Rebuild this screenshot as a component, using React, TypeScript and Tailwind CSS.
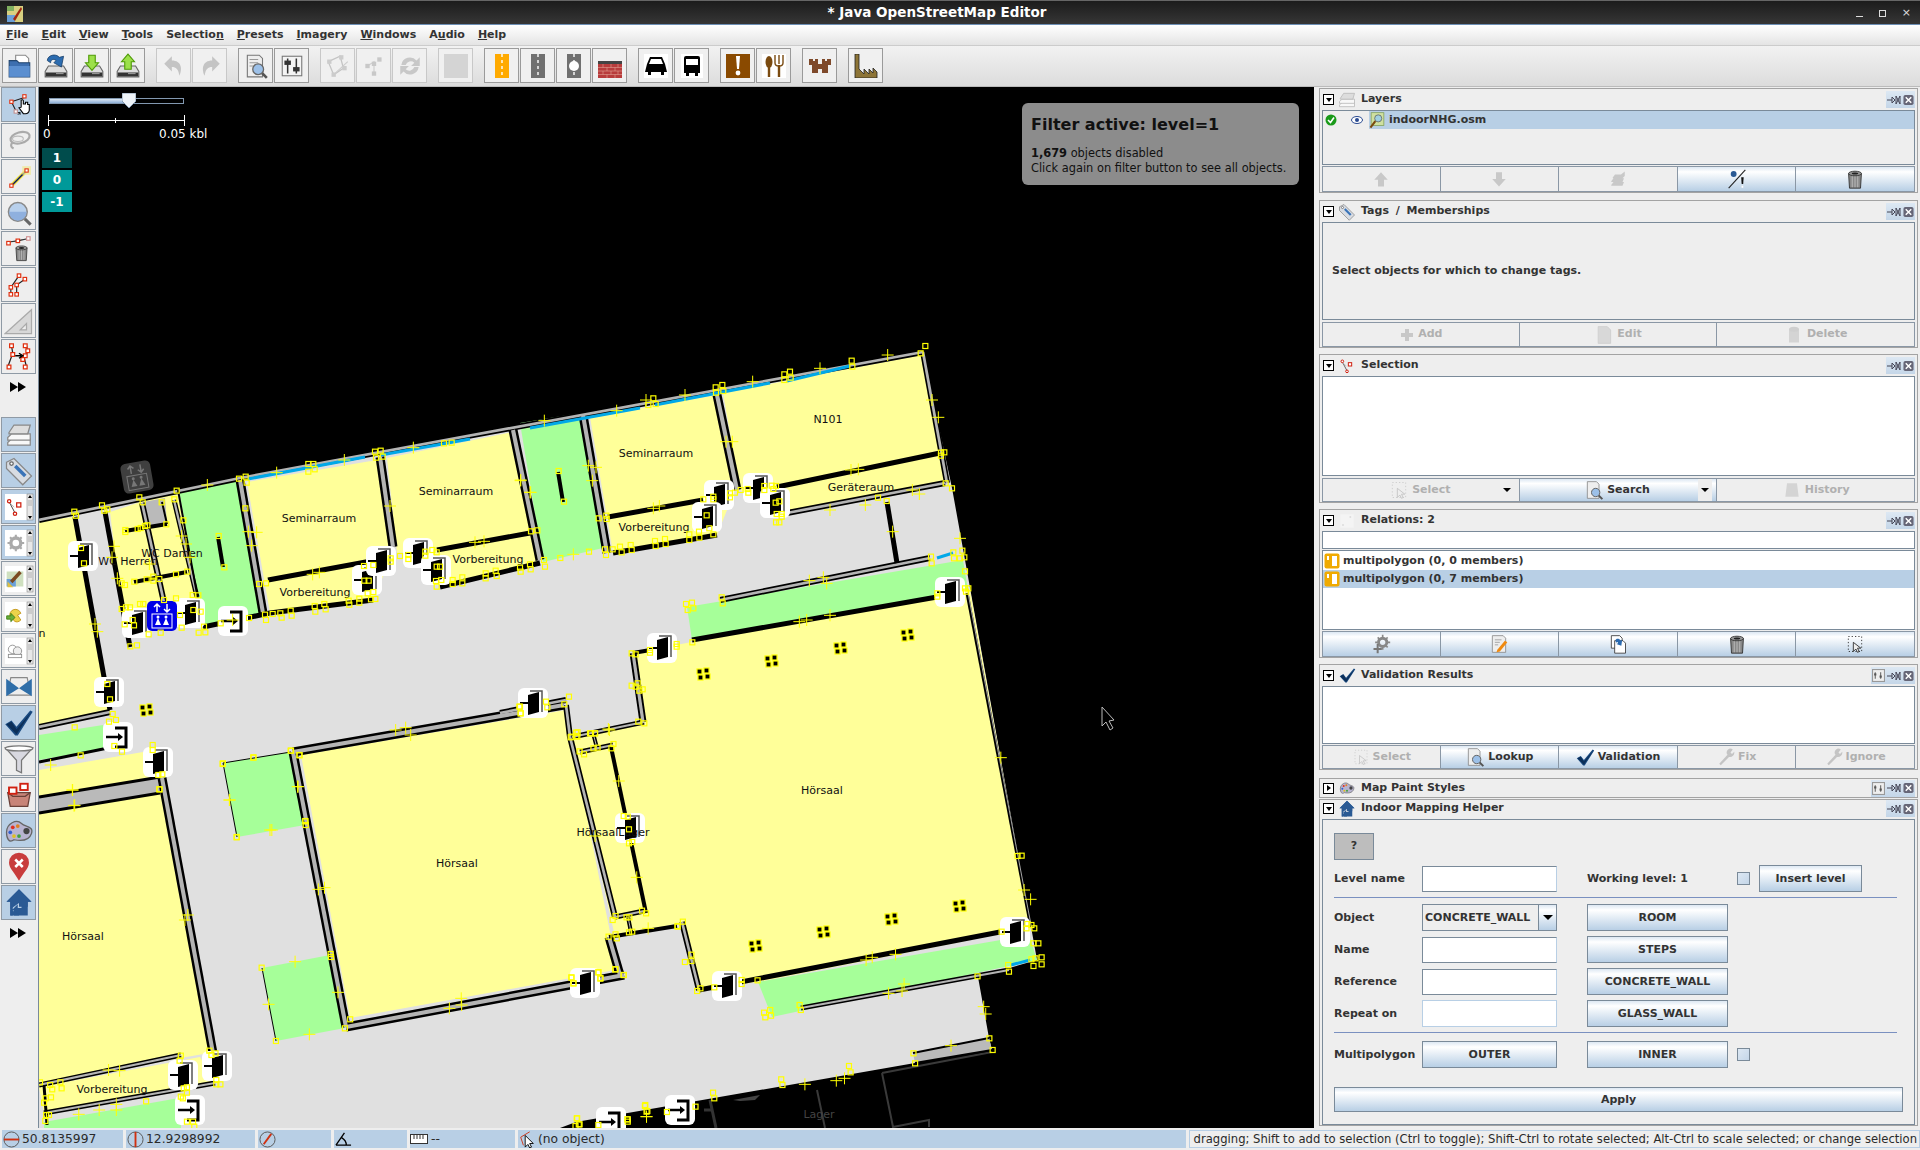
import type { ReactNode } from "react";

// ---------- map data (zoom crops converted to page pixels) ----------
type P = [number, number];
const z9 = (a: P[]) => a.map(([x, y]): P => [40 + x / 3, 440 + y / 3]);
const z10 = (a: P[]) => a.map(([x, y]): P => [500 + x / 3, 340 + y / 3]);
const z11 = (a: P[]) => a.map(([x, y]): P => [40 + x / 2.45, 700 + y / 3]);
const z12 = (a: P[]) => a.map(([x, y]): P => [560 + x / 2.45, 620 + y / 3]);

const squares: P[] = [
  ...z9([[103,215],[108,227],[186,196],[202,208],[193,212],[298,172],[308,187],[365,187],[403,178],[410,152],[430,241],[379,253],[293,267],[302,264],[315,258],[322,256],[256,270],[256,276],[597,116],[617,110],[620,128],[616,205],[805,72],[820,72],[824,88],[805,95],[1005,35],[1022,32],[1028,50],[1008,53],[1212,10],[1235,8],[536,288],[553,382],[320,418],[340,410],[340,422],[358,417],[408,403],[283,425],[442,395],[245,430],[255,435],[300,492],[310,492],[372,480],[408,475],[458,465],[475,466],[245,507],[258,502],[270,502],[254,553],[278,540],[282,556],[326,583],[362,578],[271,619],[291,616],[420,525],[425,563],[460,510],[482,515],[492,560],[476,578],[496,577],[542,550],[627,534],[657,432],[678,430],[675,524],[678,540],[698,522],[721,520],[725,533],[752,512],[755,527],[824,498],[826,515],[853,492],[857,508],[926,482],[928,494],[958,476],[958,488],[993,478],[1006,477],[983,460],[1000,456],[972,378],[973,422],[986,422],[1000,375],[1052,355],[1052,365],[1080,348],[1105,345],[1105,357],[1156,335],[1156,347],[1177,330],[1190,337],[1190,380],[1200,380],[1188,423],[1204,420],[1190,440],[1238,420],[1238,432],[1267,412],[1267,430],[1337,400],[1337,415],[1367,392],[1370,408],[1440,383],[1442,395],[1470,373],[1472,388],[1473,274],[1492,271],[123,324],[132,370],[202,732],[210,778],[218,822],[228,840],[207,845],[223,918],[246,935],[338,915],[338,930],[355,1005],[367,1003],[104,862],[122,946],[358,1048],[548,972],[640,953],[752,932],[778,945],[796,1144],[590,1192],[1440,800],[1442,820]]),
  ...z10([[445,195],[460,175],[467,192],[647,142],[667,135],[670,153],[648,158],[853,103],[870,95],[872,113],[853,120],[1055,62],[1057,80],[1262,40],[1276,18],[1323,338],[1333,337],[1323,347],[1337,430],[1356,445],[1160,483],[1134,473],[319,527],[320,537],[296,535],[315,628],[318,645],[338,628],[360,620],[365,637],[392,615],[395,630],[465,603],[467,618],[495,597],[497,612],[568,583],[568,600],[597,575],[598,593],[640,583],[628,565],[610,478],[640,470],[640,478],[690,460],[690,472],[705,458],[722,450],[743,447],[745,458],[793,438],[793,450],[815,437],[828,438],[820,447],[827,488],[838,484],[830,522],[845,522],[845,530],[828,547],[838,547],[620,526],[176,393],[192,485],[132,660],[135,680],[181,654],[267,635],[558,792],[576,788],[563,810],[580,805],[665,772],[668,790],[577,907],[395,940],[407,943],[530,912],[530,920],[450,930],[450,938],[395,1037],[413,1030],[407,1040],[428,1048],[418,1052],[415,1145],[433,1150],[193,1093],[207,1070],[138,1085],[142,1102],[58,1100],[62,1120],[228,1178],[232,1190],[212,1192],[270,1180],[285,1180],[1293,650],[1295,670],[1360,637],[1362,655],[1380,655],[1393,652],[1387,632],[1395,694],[1312,760],[1312,770],[1395,745],[1405,745],[1398,755]]),
  ...z11([[1302,110],[1314,108],[1317,97],[1350,100],[1360,100],[1405,132],[1400,145],[1322,154],[1333,163],[1356,145],[1366,143],[1430,348],[1440,350],[1443,388],[1443,430],[1451,426],[1403,660],[1410,648],[1437,652],[1444,652],[1475,632],[1485,640],[1443,697],[1451,695],[1393,710],[1410,703],[1413,715],[1410,808],[1430,825],[1562,680],[1302,832],[1307,850],[1368,817],[1373,834],[448,190],[523,172],[615,152],[636,166],[650,363],[651,375],[482,411],[543,803],[712,762],[713,771],[760,958],[747,985],[578,1023],[293,268],[415,1052],[420,1065],[430,1060],[345,1067],[342,1082],[432,1140],[432,1153],[442,1153],[352,1165],[360,1162],[360,1178],[345,1190],[350,1195],[0,1147],[25,1155],[50,1147],[53,1165],[30,1168],[14,1195],[27,1192],[10,1208],[15,1245],[22,1245],[13,1263],[260,1204],[375,1265],[360,1265],[378,1280],[1315,1255],[1320,1273],[1312,1278],[1368,1275],[1440,1258],[1440,1265],[1483,1215],[1488,1233],[1536,1236]]),
  ...z12([[1121,708],[1131,707],[1145,912],[1155,915],[1162,925],[1143,925],[1160,970],[1172,970],[1165,1015],[1180,1012],[1155,1018],[1160,1038],[1180,1033],[1098,1035],[1100,1055],[1023,1069],[1082,935],[1052,1255],[1060,1290],[866,1300],[870,1330],[587,1155],[590,1170],[500,1178],[503,1192],[515,1170],[517,1187],[484,1081],[336,1113],[344,1105],[378,1102],[306,1026],[322,1023],[322,1004],[301,905],[288,918],[156,1065],[135,1048],[94,1057],[99,1076],[28,1073],[33,1090],[445,1080],[445,1092],[375,1418],[378,1435],[542,1378],[545,1395],[708,1338],[712,1357],[208,1458],[212,1475],[42,1495],[48,1513],[332,1460],[165,1498]]),
];

const crosses: P[] = [
  ...z9([[502,135],[710,98],[913,60],[1120,23],[1442,120],[1470,157],[1050,198],[625,275],[650,277],[635,317],[425,288],[438,312],[450,352],[328,372],[222,319],[216,352],[232,415],[818,403],[838,397],[1305,307],[1332,304],[578,540],[165,552],[172,575],[32,975],[97,1050],[102,1097],[1067,870],[1097,863],[1112,885],[773,1040],[568,1080],[690,1170]]),
  ...z10([[133,242],[350,212],[438,180],[555,165],[758,125],[960,85],[1163,45],[1296,180],[1315,232],[1237,450],[1258,462],[1096,495],[990,510],[1053,390],[1075,388],[678,305],[697,305],[460,505],[478,498],[265,377],[288,382],[277,422],[1178,575],[1380,595],[928,722],[970,712],[980,730],[898,845],[920,840],[990,826],[325,1167],[220,643],[62,422],[92,457]]),
  ...z11([[1395,90],[1418,243],[1360,408],[1462,532],[1490,685],[362,645],[355,660],[625,785],[730,877],[560,913],[660,1003],[1003,925],[1032,895],[1033,915],[168,1110],[195,1112],[187,1213],[187,1230],[95,1243],[145,1230],[1486,1250],[80,270],[85,316],[632,260],[465,300],[568,390],[682,568],[697,563]]),
  ...z12([[1080,413],[1137,810],[1153,838],[750,1020],[765,1012],[822,1003],[805,1120],[838,1113],[843,1092],[1038,1160],[1043,1182],[958,1277],[600,1393],[677,1382],[697,1375],[212,1490]]),
];

// 4-node furniture clusters in the big hall
const clusters: P[] = [[703,674],[771,661],[840,648],[907,635],[755,946],[823,932],[891,919],[959,906],[146,710]];

const doors: P[] = [[83,556],[109,692],[158,762],[137,623],[190,613],[367,580],[381,561],[418,553],[436,570],[533,703],[719,495],[707,517],[758,488],[775,503],[662,648],[950,592],[630,828],[585,983],[183,1075],[217,1066],[727,986],[1015,932]];
const entrances: P[] = [[233,621],[118,737],[190,1110],[611,1122],[680,1110]];

const yellow = [
  "723,393 921,355 945,483 787,513 740,490",
  "590,417 717,395 735,490 717,535 613,553",
  "387,458 513,432 537,563 440,587 425,550 397,553",
  "247,482 377,460 393,553 373,600 270,613",
  "110,512 177,490 197,597 122,612",
  "39,521 73,517 110,710 39,727",
  "39,770 143,752 160,777 39,797",
  "39,813 160,790 209,1053 39,1083",
  "39,1087 200,1057 215,1083 44,1113",
  "301,755 566,710 571,737 611,937 615,970 350,1018",
  "633,653 692,642 970,590 1031,928 758,982 699,990 682,922 650,930 615,937 571,737 643,722",
];
const green = [
  "179,490 240,480 263,613 203,627",
  "520,423 580,413 603,548 543,562",
  "39,735 103,725 108,748 39,760",
  "44,1122 179,1098 181,1128 44,1128",
  "223,763 291,752 305,825 237,837",
  "262,968 330,955 345,1028 276,1041",
  "687,607 963,560 968,590 692,640",
  "758,982 1029,935 1037,960 772,1017",
];
const grayFill = [
  "143,502 165,498 167,523 147,528",
  "39,797 160,777 160,793 39,813",
  "913,1053 989,1038 992,1050 915,1063",
];

// black line with gray core
const doubleWalls: [string, number][] = [
  ["39,520 240,478 923,352", 6],
  ["240,480 263,613", 9],
  ["513,430 540,560", 9],
  ["583,415 607,553", 9],
  ["380,457 393,547", 9],
  ["717,395 737,490", 9],
  ["923,352 947,483", 6],
  ["787,513 945,483", 6],
  ["720,600 930,558", 6],
  ["633,653 643,722", 7],
  ["572,737 644,722", 5],
  ["580,752 613,745", 5],
  ["39,727 110,712", 6],
  ["162,778 213,1053", 9],
  ["39,1085 181,1055", 5],
  ["44,1113 215,1083", 5],
  ["500,713 566,700", 6],
  ["293,752 564,705", 9],
  ["293,752 346,1027", 9],
  ["346,1027 624,975", 9],
  ["566,705 570,737 615,917", 6],
  ["609,937 620,975", 9],
  ["615,917 644,911", 5],
  ["593,733 597,748", 4],
  ["628,917 631,932", 4],
  ["682,922 699,990", 6],
  ["801,1008 1009,970", 5],
  ["142,503 165,607", 6],
  ["174,500 197,597", 5],
];
const blackWalls: [string, number][] = [
  ["178,490 203,627", 2],
  ["218,537 223,567", 4],
  ["558,472 563,502", 4],
  ["268,580 393,557", 5],
  ["437,550 530,533", 5],
  ["608,517 703,500", 5],
  ["777,487 940,453", 5],
  ["203,627 270,613 373,600", 5],
  ["440,587 540,563", 5],
  ["613,553 717,535", 5],
  ["887,502 897,563", 5],
  ["692,640 937,597", 5],
  ["633,653 662,648", 4],
  ["75,517 110,710", 5],
  ["105,512 130,647", 5],
  ["162,502 167,524", 2],
  ["125,531 167,524", 4],
  ["134,582 187,572", 4],
  ["39,762 108,748", 3],
  ["39,797 160,777", 3],
  ["39,813 160,793", 3],
  ["611,747 646,913", 4],
  ["609,937 677,926", 4],
  ["699,990 1000,932", 5],
  ["913,1053 989,1038", 2],
  ["915,1063 992,1050", 2],
  ["223,763 291,752", 1],
  ["223,763 237,837", 1],
  ["262,968 276,1041", 1],
  ["44,1085 47,1125", 3],
];
const blueSegs = ["248,479 365,457", "381,455 470,439", "530,428 640,408", "655,405 770,383", "787,381 850,366", "1011,965 1030,960", "937,558 953,553"];
const labels: [string, number, number][] = [
  ["Seminarraum", 319, 518],
  ["Seminarraum", 456, 491],
  ["Seminarraum", 656, 453],
  ["N101", 828, 419],
  ["Geräteraum", 861, 487],
  ["Vorbereitung", 315, 592],
  ["Vorbereitung", 488, 559],
  ["Vorbereitung", 654, 527],
  ["Vorbereitung", 112, 1089],
  ["WC Herren", 128, 561],
  ["WC Damen", 172, 553],
  ["Hörsaal", 457, 863],
  ["Hörsaal", 83, 936],
  ["Hörsaal", 822, 790],
  ["HörsaalLager", 613, 832],
  ["n", 42, 633],
];

function Door({ x, y }: { x: number; y: number }) {
  return (
    <g transform={`translate(${x} ${y})`}>
      <rect x="-15" y="-15" width="30" height="30" rx="6" fill="#fff" />
      <path d="M-3 -12H9V9" stroke="#555" strokeWidth="1.5" fill="none" />
      <polygon points="-5,-8 6,-11 6,9 -5,12" fill="#000" />
      <path d="M-13 0H-4" stroke="#000" strokeWidth="2" />
    </g>
  );
}

function Entrance({ x, y }: { x: number; y: number }) {
  return (
    <g transform={`translate(${x} ${y})`}>
      <rect x="-15" y="-15" width="30" height="30" rx="6" fill="#fff" />
      <path d="M-3 -9H8V10H-3" stroke="#000" strokeWidth="3" fill="none" />
      <path d="M-12 0H2" stroke="#000" strokeWidth="2.5" />
      <path d="M0 -4L5 0L0 4Z" fill="#000" />
    </g>
  );
}

function Elevator({ x, y, bg, fg, rot = 0 }: { x: number; y: number; bg: string; fg: string; rot?: number }) {
  return (
    <g transform={`translate(${x} ${y}) rotate(${rot})`}>
      <rect x="-15" y="-15" width="30" height="30" rx="5" fill={bg} />
      <path d="M-5 -4V-12M-8 -9L-5 -12L-2 -9M5 -12V-4M2 -7L5 -4L8 -7" stroke={fg} strokeWidth="1.5" fill="none" />
      <rect x="-10" y="-2" width="20" height="14" fill="none" stroke={fg} />
      <circle cx="-4" cy="1" r="1.5" fill={fg} />
      <circle cx="4" cy="1" r="1.5" fill={fg} />
      <path d="M-4 2L-7 9H-1ZM4 2L1 9H7Z" fill={fg} />
    </g>
  );
}

function MapCanvas() {
  return (
    <svg viewBox="39 87 1275 1041" className="block w-full h-full bg-black">
      {/* ghost layers */}
      <Elevator x={137} y={477} bg="#3f3f3f" fg="#777" rot={-10} />
      <polygon points="39,520 240,478 923,352 952,488 965,560 1037,960 978,977 989,1038 992,1050 915,1063 576,1122 560,1128 39,1128" fill="#e0e0e0" />
      <path d="M817 1090L825 1128M882 1073L893 1127L929 1120V1127M882 1073L992 1052" stroke="#3a3a3a" strokeWidth="2" fill="none" />
      <path d="M710 1100L716 1128M704 1110H712" stroke="#333" strokeWidth="3" fill="none" />
      <polygon points="733,1100 760,1095 755,1100 740,1101" fill="#444" />
      <text x={819} y={1118} textAnchor="middle" fontSize={11} fill="#444">Lager</text>

      {yellow.map((p) => <polygon key={p} points={p} fill="#ffff99" />)}
      {green.map((p) => <polygon key={p} points={p} fill="#a6ff99" />)}
      {grayFill.map((p) => <polygon key={p} points={p} fill="#bababa" />)}

      {doubleWalls.map(([p, w]) => (
        <polyline key={p} points={p} fill="none" stroke="#000" strokeWidth={w} />
      ))}
      {doubleWalls.map(([p, w]) => (
        <polyline key={p + "c"} points={p} fill="none" stroke="#b4b4b4" strokeWidth={w > 4 ? w / 2.2 : 1} />
      ))}
      {blackWalls.map(([p, w]) => (
        <polyline key={p} points={p} fill="none" stroke="#000" strokeWidth={w} />
      ))}
      {blueSegs.map((p) => <polyline key={p} points={p} fill="none" stroke="#00a8e8" strokeWidth={3} />)}
      <polyline points="967,593 1031,928" stroke="#000" strokeWidth={3} />
      <polyline points="968,593 1032,930" stroke="#d0d0d0" strokeWidth={0.8} />

      {doors.map(([x, y]) => <Door key={`${x}-${y}`} x={x} y={y} />)}
      {entrances.map(([x, y]) => <Entrance key={`${x}-${y}`} x={x} y={y} />)}
      <Elevator x={162} y={616} bg="#0000e6" fg="#fff" />

      {labels.map(([t, x, y]) => (
        <text key={t + x} x={x} y={y + 4} textAnchor="middle" fontSize={11} fill="#111">{t}</text>
      ))}

      {crosses.map(([x, y], i) => (
        <path key={i} d={`M${x - 6} ${y}H${x + 6}M${x} ${y - 6}V${y + 6}`} stroke="#ffff00" strokeWidth={1} />
      ))}
      {squares.map(([x, y], i) => (
        <rect key={i} x={x - 2.5} y={y - 2.5} width={5} height={5} fill="none" stroke="#ffff00" strokeWidth={1.2} />
      ))}
      {clusters.map(([x, y], i) => (
        <g key={i} fill="#000" stroke="#ffff00" strokeWidth={1.2}>
          <rect x={x - 6} y={y - 5} width={5} height={5} />
          <rect x={x + 1} y={y - 6} width={5} height={5} />
          <rect x={x - 5} y={y + 1} width={5} height={5} />
          <rect x={x + 2} y={y} width={5} height={5} />
        </g>
      ))}

      {/* mouse pointer */}
      <path d="M1102 707V726L1106 722L1110 730L1113 728L1109 721L1114 720Z" fill="#000" stroke="#bbb" strokeWidth={1} />
    </svg>
  );
}

// ---------- icons ----------
function Ico({ s = 26, children, className = "" }: { s?: number; children: ReactNode; className?: string }) {
  return (
    <svg viewBox="0 0 24 24" width={s} height={s} className={className}>
      {children}
    </svg>
  );
}

const N = ({ x, y, c = "#e03010" }: { x: number; y: number; c?: string }) => (
  <rect x={x - 1.5} y={y - 1.5} width="3" height="3" fill="#fff" stroke={c} strokeWidth="1" />
);

const Drive = () => (
  <g>
    <path d="M5 12H19L22 17V22H2V17Z" fill="#ddd" stroke="#666" />
    <rect x="2.5" y="18" width="19" height="3.5" fill="#333" />
    <path d="M12 19H19" stroke="#999" />
  </g>
);
const GreenArrow = ({ up = false }: { up?: boolean }) => (
  <path d={up ? "M12 1L18 8H15V15H9V8H6Z" : "M12 16L18 9H15V2H9V9H6Z"} fill="#9ce04a" stroke="#4e9a06" />
);
const IconFolder = () => (
  <Ico><path d="M8 2H17L20 5V14H8Z" fill="#fff" stroke="#888" /><path d="M2 7H9L11 9H21V22H2Z" fill="#3d6fb0" stroke="#23466f" /><path d="M2 12H21V22H2Z" fill="#5b8fd0" /></Ico>
);
const IconOpenLoc = () => (
  <Ico><Drive /><path d="M4 7C4 2 12 0 15 4L19 3L17 13L10 9L12 7C10 5 7 6 7 9Z" fill="#2c6cb0" stroke="#173c64" strokeWidth=".7" /></Ico>
);
const IconDown = () => <Ico><Drive /><GreenArrow /></Ico>;
const IconUp = () => <Ico><Drive /><GreenArrow up /></Ico>;
const IconUndo = () => <Ico><path d="M10 3L3 10L10 17V13C14 13 16 15 17 21C20 15 19 7 10 7Z" fill="#c4c4c4" /></Ico>;
const IconRedo = () => <Ico><path d="M14 3L21 10L14 17V13C10 13 8 15 7 21C4 15 5 7 14 7Z" fill="#c4c4c4" /></Ico>;
const Lens = ({ x = 15, y = 15, r = 5 }: { x?: number; y?: number; r?: number }) => (
  <g>
    <path d={`M${x + r * 0.7} ${y + r * 0.7}L${x + r + 3} ${y + r + 3}`} stroke="#555" strokeWidth="2.4" />
    <circle cx={x} cy={y} r={r} fill="#9cc0e8" stroke="#666" strokeWidth="1.2" />
  </g>
);
const IconPageSearch = () => (
  <Ico><path d="M4 2H15L18 5V22H4Z" fill="#eee" stroke="#777" /><path d="M6 6H14M6 9H14M6 12H10" stroke="#999" /><Lens x={14} y={15} r={5} /></Ico>
);
const IconPrefs = () => (
  <Ico><rect x="3" y="3" width="18" height="18" fill="#f4f4f4" stroke="#777" /><path d="M8 5V19M16 5V19" stroke="#333" strokeWidth="1.4" /><rect x="5" y="7" width="6" height="4" fill="#333" /><rect x="13" y="13" width="6" height="4" fill="#333" /></Ico>
);
const IconDisA = () => (
  <Ico><path d="M3 8L14 3L17 14L8 20Z" fill="none" stroke="#c4c4c4" strokeWidth="1.2" /><path d="M8 20L21 8" stroke="#ccc" /><rect x="2" y="6" width="4" height="4" fill="#ccc" /><rect x="13" y="2" width="4" height="4" fill="#ccc" /><rect x="6" y="18" width="4" height="4" fill="#ccc" /><rect x="16" y="12" width="4" height="4" fill="#ccc" /></Ico>
);
const IconDisB = () => (
  <Ico><path d="M6 12L12 8V18" stroke="#ccc" fill="none" /><rect x="4" y="10" width="4" height="4" fill="#c8c8c8" /><rect x="15" y="4" width="4" height="4" fill="#c8c8c8" /><rect x="10" y="8" width="4" height="4" fill="#c8c8c8" /><rect x="10" y="17" width="4" height="4" fill="#c8c8c8" /></Ico>
);
const IconDisC = () => (
  <Ico><path d="M4 11A8 8 0 0 1 18 7L21 4V12H13L16 9A5 5 0 0 0 8 11Z" fill="#c8c8c8" /><path d="M20 13A8 8 0 0 1 6 17L3 20V12H11L8 15A5 5 0 0 0 16 13Z" fill="#c8c8c8" /></Ico>
);
const IconRoad = ({ bg, dash = "#fff", circle = false }: { bg: string; dash?: string; circle?: boolean }) => (
  <Ico s={24}><rect x="5" y="0" width="14" height="24" fill={bg} /><path d="M12 0V24" stroke={dash} strokeWidth="1.4" strokeDasharray="3 3" />{circle && <circle cx="12" cy="12" r="5" fill="#fff" />}</Ico>
);
const IconWall = () => (
  <Ico s={24}>
    <rect x="0" y="10" width="24" height="14" fill="#b83c3c" />
    <rect x="0" y="7" width="24" height="3" fill="#444" />
    <path d="M0 13.5H24M0 17H24M0 20.5H24M5 10V13.5M13 10V13.5M20 10V13.5M9 13.5V17M17 13.5V17M5 17V20.5M13 17V20.5M20 17V20.5M9 20.5V24M17 20.5V24" stroke="#e8b0a0" strokeWidth=".5" />
  </Ico>
);
const IconCar = () => (
  <Ico s={24}><rect x="0" y="0" width="24" height="24" fill="#fff" /><path d="M6 3H18L21 10L23 18H20V21H17V18H7V21H4V18H1L3 10ZM7 5L5 10H19L17 5Z" fill="#000" fillRule="evenodd" /></Ico>
);
const IconBus = () => (
  <Ico s={24}><rect x="1" y="0" width="22" height="24" fill="#fff" /><path d="M6 2H18Q20 2 20 4V19H18V22H15V19H9V22H6V19H4V4Q4 2 6 2ZM6 5V11H18V5Z" fill="#000" fillRule="evenodd" /></Ico>
);
const IconWarn = () => (
  <Ico s={24}><rect x="0" y="0" width="24" height="24" fill="#8a4a00" /><path d="M10 2H14L13 15H11Z" fill="#fff" /><circle cx="12" cy="19" r="2.4" fill="#fff" /></Ico>
);
const IconFood = () => (
  <Ico s={24}><rect x="0" y="0" width="24" height="24" fill="#fff" /><ellipse cx="7" cy="8" rx="3.5" ry="6" fill="#7a4a10" /><path d="M7 12V23M17 11V23" stroke="#7a4a10" strokeWidth="2.4" /><path d="M13 1V9Q13 12 17 12Q21 12 21 9V1M17 1V10" stroke="#7a4a10" strokeWidth="1.4" fill="none" /></Ico>
);
const IconCastle = () => (
  <Ico s={24}><path d="M1 5H5V7H7V5H10V10H14V5H17V7H19V5H23V11H20V19H14V15H10V19H4V11H1Z" fill="#7f4a2b" /></Ico>
);
const IconFactory = () => (
  <Ico s={24}><path d="M1 0H5V15L10 20L10 15L15 20V15L19 19V14L23 18V24H1Z" fill="#8d7436" stroke="#222" strokeWidth=".8" /></Ico>
);
const IconSelect = () => (
  <Ico s={26}>
    <path d="M5 9L17 5M5 9L9 17" stroke="#222" strokeWidth="1" fill="none" />
    <N x={5} y={9} /><N x={17} y={4} /><N x={9} y={18} c="#c09090" />
    <path d="M14 11V7.5Q15.5 6.5 16 8V11H18V9.5H20V11.5H21.5V17Q21 20 18 20H16L12 14.5L14 14Z" fill="#fff" stroke="#000" strokeWidth="1" />
    <path d="M13 19L11 21M13 21V19H11" stroke="#000" strokeWidth=".8" fill="none" />
  </Ico>
);
const IconLasso = () => (
  <Ico s={26}><ellipse cx="13" cy="9" rx="9" ry="5" fill="none" stroke="#aaa" strokeWidth="2" transform="rotate(-15 13 9)" /><ellipse cx="11" cy="10" rx="5" ry="2.5" fill="none" stroke="#bbb" /><path d="M6 13Q3 17 7 19" stroke="#aaa" strokeWidth="2" fill="none" /></Ico>
);
const IconDraw = () => (
  <Ico s={26}><path d="M5 20L19 6" stroke="#f0e040" strokeWidth="3.5" /><path d="M5 20L19 6" stroke="#102060" strokeWidth="1.4" /><rect x="15" y="2" width="8" height="8" fill="#f0e890" opacity=".7" /><N x={19} y={6} /><N x={5} y={20} /></Ico>
);
const IconZoom = () => <Ico s={28}><circle cx="11" cy="11" r="8" fill="#b8d0ec" stroke="#888" strokeWidth="1.4" /><path d="M3.4 11H18.6A7.6 7.6 0 0 1 3.4 11" fill="#8fb0de" /><path d="M17 17L22 22" stroke="#666" strokeWidth="2.6" /></Ico>;
const Trash = ({ x = 0, y = 0, s = 1 }: { x?: number; y?: number; s?: number }) => (
  <g transform={`translate(${x} ${y}) scale(${s})`}>
    <path d="M5 6H19L18 22H6Z" fill="#888" stroke="#333" />
    <ellipse cx="12" cy="6" rx="7" ry="2.5" fill="#999" stroke="#333" />
    <ellipse cx="12" cy="6" rx="3.5" ry="1.2" fill="#222" />
    <path d="M9 9V21M12 9V21M15 9V21" stroke="#ccc" strokeWidth=".8" />
  </g>
);
const IconDelete = () => (
  <Ico s={28}><path d="M3 6L11 5L20 3" stroke="#333" strokeWidth="1" /><N x={3} y={7} /><N x={11} y={5} /><N x={20} y={3} c="#d09090" /><Trash x={6} y={7} s={0.68} /></Ico>
);
const IconSplit = () => (
  <Ico s={28}><path d="M5 20V14L12 4M10 20V12L17 7" fill="none" stroke="#222" strokeWidth="1" /><N x={5} y={20} /><N x={5} y={14} /><N x={12} y={4} /><N x={10} y={20} /><N x={10} y={12} /><N x={17} y={7} /></Ico>
);
const IconRuler = () => (
  <Ico s={30}><path d="M1 22L22 3V22ZM13 19H18V14Z" fill="#d8d8d8" fillRule="evenodd" stroke="#aaa" /></Ico>
);
const IconMerge = () => (
  <Ico s={30}><path d="M6 3L7 9L3 20M18 3L19 8L16 12L18 20" fill="none" stroke="#222" /><N x={6} y={3} /><N x={7} y={10} /><N x={4} y={20} /><N x={17} y={3} /><N x={19} y={7} /><N x={17} y={11} /><N x={15} y={14} /><N x={17} y={20} /><path d="M9 11H14M12 9L15 11L12 13" stroke="#000" strokeWidth="1.2" fill="none" /></Ico>
);
const IconLayers = ({ dim = false, s = 30 }: { dim?: boolean; s?: number }) => (
  <Ico s={s}><g fill="#f8f8f8" stroke={dim ? "#bbb" : "#888"} strokeWidth="1"><path d="M3 18L6 15H21V20H3Z" /><path d="M3 14L6 11H21V16H3Z" /><path d="M4 10L8 4H21L19 11H4Z" fill="#ddd" /></g></Ico>
);
const IconTag = ({ s = 30 }: { s?: number }) => (
  <Ico s={s}><path d="M2 5L8 2L22 16L15 23L2 10Z" fill="#d8dce2" stroke="#888" /><circle cx="6" cy="6" r="1.4" fill="#fff" stroke="#666" /><path d="M8 9L16 17L18 15L10 7Z" fill="#3a74b8" /></Ico>
);
const Scroll = ({ children }: { children: ReactNode }) => (
  <div className="relative w-[30px] h-[30px] flex items-center">
    <svg viewBox="0 0 30 30" width={30} height={30} className="absolute inset-0">
      <rect x="1" y="2" width="22" height="26" fill="#fff" />
      <rect x="23" y="2" width="6" height="26" fill="#e8e8e8" stroke="#777" strokeWidth=".5" />
      <path d="M24 6L26 3L28 6ZM24 24L26 27L28 24Z" fill="#000" />
      <rect x="23.5" y="8" width="5" height="6" fill="#ccc" />
    </svg>
    <div className="relative ml-[1px]">{children}</div>
  </div>
);
const IconSel = ({ s = 20 }: { s?: number }) => (
  <Ico s={s}><path d="M4 4L13 21" stroke="#222" /><path d="M3 5L11 12" stroke="#aaa" /><circle cx="5" cy="5" r="2" fill="#fff" stroke="#d02010" strokeWidth="1.5" /><rect x="14" y="7" width="5" height="5" fill="#fff" stroke="#d02010" strokeWidth="1.5" /><circle cx="12" cy="20" r="2" fill="#fff" stroke="#d02010" strokeWidth="1.5" /></Ico>
);
const IconGear = ({ s = 20, c = "#c8c8c8" }: { s?: number; c?: string }) => (
  <Ico s={s}><circle cx="13" cy="12" r="6" fill="none" stroke={c} strokeWidth="4" /><path d="M13 2V5M13 19V22M3 12H6M20 12H23M6 5L8 7M18 17L20 19M20 5L18 7M6 19L8 17" stroke={c} strokeWidth="2.5" /></Ico>
);
const IconMapPaint = ({ s = 20 }: { s?: number }) => (
  <Ico s={s}><rect x="2" y="3" width="20" height="18" fill="#cfe0c0" /><rect x="2" y="12" width="11" height="9" fill="#6aa0d8" /><path d="M6 14L17 2L20 5L9 17Z" fill="#7a4a20" /><path d="M3 15L10 22H3Z" fill="#e0c040" /></Ico>
);
const IconGroups = ({ s = 20 }: { s?: number }) => (
  <Ico s={s}><path d="M6 14A6 6 0 0 1 19 10L15 12L19 18C14 23 8 19 9 13" fill="#ecd34a" stroke="#c09010" /><path d="M2 13H7V10L12 15L7 20V17H2Z" fill="#6ab03a" stroke="#3a7a10" /></Ico>
);
const IconDrawings = ({ s = 20 }: { s?: number }) => (
  <Ico s={s}><circle cx="9" cy="10" r="5" fill="#fff" stroke="#888" /><circle cx="15" cy="12" r="5" fill="#eee" stroke="#888" /><rect x="4" y="16" width="16" height="4" fill="#fff" stroke="#888" /></Ico>
);
const IconEnvelope = () => (
  <Ico s={28}><path d="M5 4H19L22 19H2Z" fill="#eee" stroke="#888" /><path d="M12 13L1 5V20Z" fill="#2f6ea8" /><path d="M12 13L23 5V20Z" fill="#2f6ea8" /></Ico>
);
const IconCheck = ({ s = 30 }: { s?: number }) => (
  <Ico s={s}><path d="M1 13L6 10L10 15L21 2L23 3L11 22H9Z" fill="#1a4a80" /><path d="M2 13L6 11L10 17L22 3L10 21Z" fill="#0c2f58" /></Ico>
);
const IconFunnel = () => (
  <Ico s={30}><path d="M1 3H23L14 13V23L10 21V13Z" fill="#d8d8e0" stroke="#777" /><ellipse cx="12" cy="3.5" rx="11" ry="2" fill="#fff" stroke="#777" /></Ico>
);
const IconBox = () => (
  <Ico s={30}><path d="M3 10H21L19 21H5Z" fill="#c88478" stroke="#6a4038" /><path d="M3 10L7 13H17L21 10" stroke="#6a4038" fill="none" /><rect x="4" y="6" width="6" height="5" fill="#fff" stroke="#d02010" strokeWidth="1.5" /><rect x="13" y="3" width="6" height="5" fill="#fff" stroke="#d02010" strokeWidth="1.5" /></Ico>
);
const IconPalette = ({ s = 30 }: { s?: number }) => (
  <Ico s={s}><path d="M2 13C2 6 10 2 14 6C17 9 24 8 22 14C20 20 13 20 8 19C4 22 2 18 2 13Z" fill="#b8b4d0" stroke="#666" /><circle cx="7" cy="9" r="1.5" fill="#e03020" /><circle cx="5" cy="13" r="1.5" fill="#3060d0" /><circle cx="8" cy="16" r="1.5" fill="#e0c020" /><circle cx="12" cy="16" r="1.5" fill="#40a040" /><circle cx="18" cy="12" r="2.5" fill="#444" /><circle cx="11" cy="8" r="1.5" fill="#e08020" /></Ico>
);
const IconMarker = () => (
  <Ico s={30}><path d="M12 23C9 17 4 13 4 8.5A8 8 0 0 1 20 8.5C20 13 15 17 12 23Z" fill="#c83c3c" /><path d="M9 6L15 12M15 6L9 12" stroke="#fff" strokeWidth="2" /></Ico>
);
const IconHome = ({ s = 30 }: { s?: number }) => (
  <Ico s={s}><path d="M12 1L22 11H19V22H8V18H6L11 13V16H14V11H16L12 6L7 11V22H5V11H2Z" fill="#2a5a94" /><path d="M5 22V11H2L12 1L22 11H19V15H12V12L5 17L12 21V22Z" fill="#2a5a94" /></Ico>
);
const Arrows = () => (
  <svg viewBox="0 0 16 10" width={16} height={10}><path d="M0 0L8 5L0 10ZM8 0L16 5L8 10Z" fill="#000" /></svg>
);

// ---------- shared widgets ----------
function ToolBtn({ children, off = false }: { children?: ReactNode; off?: boolean }) {
  return (
    <div className={`w-[35px] h-[35px] mr-[1px] flex items-center justify-center overflow-hidden border bg-[#f0f0f0] ${off ? "border-[#c8c8c8]" : "border-[#9a9a9a]"}`}>
      {children}
    </div>
  );
}

function SideBtn({ children, active = false }: { children?: ReactNode; active?: boolean }) {
  return (
    <div className={`w-[35px] h-[35px] mb-[1px] ml-[1px] flex items-center justify-center overflow-hidden border border-[#8f9aa5] ${active ? "bg-[#b8cfe5]" : "bg-[#eeeeee]"}`}>
      {children}
    </div>
  );
}

function Check() {
  return <div className="w-[13px] h-[13px] border border-[#7a8a99] bg-linear-to-br from-[#dde8f3] to-[#c4d6e8]" />;
}

const btnOn = "bg-linear-to-b from-[#dde8f3] via-[#ffffff] via-[20%] to-[#b8cfe5] text-[#333]";

function PanelBtn({ children, on = false, label }: { children?: ReactNode; on?: boolean; label?: string }) {
  return (
    <div className={`relative flex items-center justify-center gap-[3px] h-full border border-[#8a97a5] -ml-px first:ml-0 text-[11px] font-bold ${on ? btnOn : "bg-[#eeeeee] text-[#b0b0b0]"}`}>
      {children}
      {label && <span>{label}</span>}
    </div>
  );
}

function FormBtn({ children, className = "" }: { children: ReactNode; className?: string }) {
  return (
    <div className={`flex items-center justify-center pt-[1px] border border-[#7a8a99] text-[11px] font-bold ${btnOn} ${className}`}>
      {children}
    </div>
  );
}

function Input({ className = "h-[26px]" }: { className?: string }) {
  return <div className={`bg-white border border-[#7a8a99] border-r-[#b8cfe5] ${className}`} />;
}

function Panel({ title, icon, className, children, open = true, extra = false, head = "h-[21px]" }: { title: ReactNode; icon?: ReactNode; className: string; children?: ReactNode; open?: boolean; extra?: boolean; head?: string }) {
  return (
    <section className={`flex flex-col border border-[#a3a3a3] bg-[#eeeeee] px-[2px] ${className}`}>
      <div className={`${head} shrink-0 flex items-center text-[11px] font-bold text-[#333]`}>
        <div className="w-[11px] h-[11px] ml-[1px] border border-black bg-white flex items-center justify-center shrink-0">
          <span className={open ? "border-x-[3px] border-x-transparent border-t-[4px] border-t-black" : "border-y-[3px] border-y-transparent border-l-[4px] border-l-black"} />
        </div>
        <div className="w-[26px] flex justify-center shrink-0">{icon}</div>
        <span className="ml-[1px]">{title}</span>
        <div className="ml-auto h-[17px] flex items-center gap-[2px] pr-[1px] pl-[1px] bg-linear-to-b from-[#dde8f3] to-[#c4d6e8]">
          {extra && (
            <svg viewBox="0 0 12 12" width={13} height={13}><rect x=".5" y=".5" width="11" height="11" fill="#eee" stroke="#999" /><path d="M3 3V9M8 3V9" stroke="#666" /><rect x="2" y="4" width="2" height="2" fill="#555" /><rect x="7" y="6" width="2" height="2" fill="#555" /></svg>
          )}
          <svg viewBox="0 0 14 12" width={14} height={12}><path d="M0 6H5M5 3L8 6L5 9ZM9 2V10M13 2V10M9 2L13 10M13 2L9 10" stroke="#445" strokeWidth="1" fill="none" /></svg>
          <svg viewBox="0 0 12 12" width={11} height={12}><rect x=".5" y=".5" width="11" height="11" rx="2" fill="#667" /><path d="M3 3L9 9M9 3L3 9" stroke="#fff" strokeWidth="1.6" /></svg>
        </div>
      </div>
      {children}
    </section>
  );
}

const FileIcon = () => (
  <Ico s={20}><path d="M5 2H16L20 6V22H5Z" fill="#d8d8d8" stroke="#ccc" /></Ico>
);
const Wrench = () => (
  <Ico s={18}><path d="M3 21L14 9A5 5 0 0 1 21 2L18 6L20 8L23 5A6 6 0 0 1 16 12L5 23Z" fill="#c4c4c4" /></Ico>
);
const SelBox = ({ c = "#c8c8c8", s = 20 }: { c?: string; s?: number }) => (
  <Ico s={s}><rect x="4" y="3" width="16" height="18" fill="none" stroke={c} strokeDasharray="1.5 2.5" /><path d="M10 10V21L13 18L15 22L17 21L15 17L19 17Z" fill="#eee" stroke={c === "#222" ? "#222" : "#c0c0c0"} /></Ico>
);
const PageLens = ({ s = 20 }: { s?: number }) => (
  <Ico s={s}><path d="M4 2H15L18 5V22H4Z" fill="#eee" stroke="#888" /><Lens x={14} y={15} r={5} /></Ico>
);
const RelIcon = () => (
  <svg viewBox="0 0 16 16" width={16} height={16} className="mr-[3px] ml-[1px]"><rect x=".5" y=".5" width="15" height="15" rx="2" fill="#f0aa00" /><rect x="8" y="3" width="5" height="10" fill="#fff" /><rect x="3" y="3" width="2" height="4" fill="#fff" /></svg>
);

const menus: ReactNode[] = [
  <><u>F</u>ile</>,
  <><u>E</u>dit</>,
  <><u>V</u>iew</>,
  <><u>T</u>ools</>,
  <>Selectio<u>n</u></>,
  <><u>P</u>resets</>,
  <><u>I</u>magery</>,
  <><u>W</u>indows</>,
  <>A<u>u</u>dio</>,
  <><u>H</u>elp</>,
];

// ---------- page ----------
export default function App() {
  return (
    <div className="w-[1920px] h-[1150px] flex flex-col overflow-hidden bg-[#eeeeee] font-['DejaVu_Sans',sans-serif] text-[#333]">
      {/* window title */}
      <header className="relative h-[25px] shrink-0 flex items-center justify-center bg-linear-to-b from-[#1c1c1c] to-[#363636] border-t border-[#666] border-b border-b-[#6d8fb5]">
        <svg viewBox="0 0 16 16" width={16} height={16} className="absolute left-[7px] top-[5px]">
          <rect width="16" height="16" fill="#d8d080" />
          <rect x="0" y="9" width="8" height="7" fill="#6aa0d8" />
          <rect x="0" y="0" width="7" height="5" fill="#80b060" />
          <path d="M6 13L14 1L15 3L8 15Z" fill="#a02810" />
        </svg>
        <span className="text-[13.5px] font-bold text-white mr-[46px]">* Java OpenStreetMap Editor</span>
        <div className="absolute right-[9px] top-[4px] flex items-center gap-[16px] text-[#ddd] text-[11px]">
          <span className="w-[7px] h-[1px] bg-[#ddd] mt-[6px]" />
          <span className="w-[7px] h-[7px] border border-[#ddd]" />
          <span>×</span>
        </div>
      </header>

      {/* menu */}
      <nav className="h-[21px] shrink-0 flex items-center pl-[6px] gap-[13px] text-[11px] font-bold text-[#333] bg-linear-to-b from-[#ffffff] to-[#e4e4e4] border-b border-[#ccc]">
        {menus.map((m, i) => (
          <span key={i}>{m}</span>
        ))}
      </nav>

      {/* main toolbar */}
      <div className="h-[41px] shrink-0 flex items-start pt-[2px] pl-[2px] bg-linear-to-b from-[#f2f2f2] to-[#dcdcdc] border-b border-[#bbb]">
        <ToolBtn><IconFolder /></ToolBtn>
        <ToolBtn><IconOpenLoc /></ToolBtn>
        <ToolBtn><IconDown /></ToolBtn>
        <ToolBtn><IconUp /></ToolBtn>
        <div className="w-[10px]" />
        <ToolBtn off><IconUndo /></ToolBtn>
        <ToolBtn off><IconRedo /></ToolBtn>
        <div className="w-[10px]" />
        <ToolBtn><IconPageSearch /></ToolBtn>
        <ToolBtn><IconPrefs /></ToolBtn>
        <div className="w-[10px]" />
        <ToolBtn off><IconDisA /></ToolBtn>
        <ToolBtn off><IconDisB /></ToolBtn>
        <ToolBtn off><IconDisC /></ToolBtn>
        <div className="w-[10px]" />
        <ToolBtn off><div className="w-[24px] h-[24px] bg-[#d4d4d4]" /></ToolBtn>
        <div className="w-[10px]" />
        <ToolBtn><IconRoad bg="#ffaa00" /></ToolBtn>
        <ToolBtn><IconRoad bg="#707070" /></ToolBtn>
        <ToolBtn><IconRoad bg="#707070" circle /></ToolBtn>
        <ToolBtn><IconWall /></ToolBtn>
        <div className="w-[10px]" />
        <ToolBtn><IconCar /></ToolBtn>
        <ToolBtn><IconBus /></ToolBtn>
        <div className="w-[10px]" />
        <ToolBtn><IconWarn /></ToolBtn>
        <ToolBtn><IconFood /></ToolBtn>
        <div className="w-[10px]" />
        <ToolBtn><IconCastle /></ToolBtn>
        <div className="w-[10px]" />
        <ToolBtn><IconFactory /></ToolBtn>
      </div>

      <div className="flex-1 min-h-0 flex">
        {/* left toolbar */}
        <aside className="w-[39px] shrink-0 border-r border-[#7a8a99] bg-[#eeeeee] flex flex-col">
          <SideBtn active><IconSelect /></SideBtn>
          <SideBtn><IconLasso /></SideBtn>
          <SideBtn><IconDraw /></SideBtn>
          <SideBtn><IconZoom /></SideBtn>
          <SideBtn><IconDelete /></SideBtn>
          <SideBtn><IconSplit /></SideBtn>
          <SideBtn><IconRuler /></SideBtn>
          <SideBtn><IconMerge /></SideBtn>
          <div className="h-[42px] flex items-center justify-center pr-[2px] -mt-[9px]"><Arrows /></div>
          <div className="h-[9px]" />
          <SideBtn active><IconLayers /></SideBtn>
          <SideBtn active><IconTag /></SideBtn>
          <SideBtn active><Scroll><IconSel /></Scroll></SideBtn>
          <SideBtn active><Scroll><IconGear s={20} c="#aaa" /></Scroll></SideBtn>
          <SideBtn><Scroll><IconMapPaint /></Scroll></SideBtn>
          <SideBtn><Scroll><IconGroups /></Scroll></SideBtn>
          <SideBtn><Scroll><IconDrawings /></Scroll></SideBtn>
          <SideBtn><IconEnvelope /></SideBtn>
          <SideBtn active><IconCheck /></SideBtn>
          <SideBtn><IconFunnel /></SideBtn>
          <SideBtn><IconBox /></SideBtn>
          <SideBtn active><IconPalette /></SideBtn>
          <SideBtn><IconMarker /></SideBtn>
          <SideBtn active><IconHome /></SideBtn>
          <div className="h-[24px] flex items-center justify-center pr-[2px]"><Arrows /></div>
        </aside>

        {/* map view */}
        <main className="relative flex-1 min-w-0 bg-black text-white">
          <MapCanvas />
          {/* zoom slider */}
          <div className="absolute left-[10px] top-[11px] w-[135px] h-[6px] border border-[#8298b0] bg-black">
            <div className="h-full w-[73px] bg-linear-to-b from-[#dde8f3] to-[#8fb0d8]" />
          </div>
          <svg viewBox="0 0 14 15" width={14} height={15} className="absolute left-[83px] top-[6px]">
            <path d="M0 0H14V8L7 15L0 8Z" fill="#eef3f8" stroke="#8298b0" />
          </svg>
          {/* scale */}
          <div className="absolute left-[9px] top-[33px] w-[136px] h-[1px] bg-white" />
          <div className="absolute left-[9px] top-[28px] w-[1px] h-[11px] bg-white" />
          <div className="absolute left-[76px] top-[31px] w-[1px] h-[5px] bg-white" />
          <div className="absolute left-[145px] top-[28px] w-[1px] h-[11px] bg-white" />
          <span className="absolute left-[4px] top-[40px] text-[12px] leading-[14px]">0</span>
          <span className="absolute left-[120px] top-[40px] text-[12px] leading-[14px] whitespace-nowrap">0.05 kbl</span>
          {/* levels */}
          <div className="absolute left-[3px] top-[61px] flex flex-col gap-[2px] w-[30px] text-white text-[12px] font-bold text-center leading-[20px]">
            <div className="h-[20px] bg-[#004c4c]">1</div>
            <div className="h-[20px] bg-[#009999]">0</div>
            <div className="h-[20px] bg-[#009999]">-1</div>
          </div>
          {/* filter info */}
          <div className="absolute left-[983px] top-[16px] w-[277px] h-[82px] rounded-[6px] bg-[#8c8c8c] text-[#111] pl-[9px] pt-[12px]">
            <div className="text-[16px] leading-[20px] font-bold">Filter active: level=1</div>
            <div className="mt-[11px] text-[11.4px] leading-[15px] whitespace-nowrap">
              <b>1,679</b> objects disabled
              <br />
              Click again on filter button to see all objects.
            </div>
          </div>
        </main>

        {/* dialogs column */}
        <aside className="w-[606px] shrink-0 pl-[5px] pr-[2px] pt-[1px] flex flex-col bg-[#eeeeee]">
          <Panel title="Layers" icon={<IconLayers dim s={20} />} className="h-[105px]">
            <div className="h-[55px] shrink-0 bg-[#eeeeee] border border-[#7a8a99]">
              <div className="flex items-center h-[18px]">
                <svg viewBox="0 0 12 12" width={12} height={12} className="ml-[2px] mr-[14px]"><circle cx="6" cy="6" r="5.5" fill="#1a9a1a" /><path d="M3 6L5.5 8.5L9 3.5" stroke="#fff" strokeWidth="1.6" fill="none" /></svg>
                <svg viewBox="0 0 12 8" width={12} height={8} className="mr-[6px]"><ellipse cx="6" cy="4" rx="5.5" ry="3.5" fill="#fff" stroke="#2a4a90" /><circle cx="6" cy="4" r="2" fill="#2a4a90" /></svg>
                <div className="flex-1 h-full bg-[#b8cfe5] flex items-center text-[11px] font-bold">
                  <Ico s={17} className="mr-[3px]"><rect x="3" y="1" width="18" height="18" fill="#cfe0a0" stroke="#7a9a50" /><circle cx="13" cy="9" r="5" fill="#a0d0e0" stroke="#555" /><path d="M9 13L2 22" stroke="#7a4a10" strokeWidth="3" /></Ico>
                  indoorNHG.osm
                </div>
              </div>
            </div>
            <div className="h-[26px] mt-[1px] grid grid-cols-5">
              <PanelBtn><Ico s={18}><path d="M12 3L21 13H16V22H8V13H3Z" fill="#c8c8c8" /></Ico></PanelBtn>
              <PanelBtn><Ico s={18}><path d="M12 22L21 12H16V3H8V12H3Z" fill="#c8c8c8" /></Ico></PanelBtn>
              <PanelBtn><Ico s={18}><path d="M3 20L6 16H20L18 21H3ZM3 15L6 11H20L18 16H3ZM5 10L8 6H16L21 2V8L18 11H5Z" fill="#c8c8c8" /></Ico></PanelBtn>
              <PanelBtn on><Ico s={20}><circle cx="8" cy="6" r="3.5" fill="#2a5a94" /><path d="M2 23L22 1" stroke="#222" strokeWidth="1.3" /><path d="M17 10H20L19.4 18H17.6Z" fill="#111" /><rect x="17.5" y="20" width="2" height="2.5" fill="#fff" /></Ico></PanelBtn>
              <PanelBtn on><Ico s={22}><Trash /></Ico></PanelBtn>
            </div>
          </Panel>

          <Panel title={<span className="[word-spacing:3px]">Tags / Memberships</span>} icon={<IconTag s={18} />} className="h-[148px] mt-[7px]">
            <div className="h-[98px] shrink-0 border border-[#7a8a99] flex items-center pl-[9px] text-[11px] font-bold text-[#333]">
              Select objects for which to change tags.
            </div>
            <div className="h-[25px] mt-[2px] grid grid-cols-3">
              <PanelBtn label="Add"><Ico s={16}><path d="M9 3H15V9H21V15H15V21H9V15H3V9H9Z" fill="#c8c8c8" /></Ico></PanelBtn>
              <PanelBtn label="Edit"><FileIcon /></PanelBtn>
              <PanelBtn label="Delete"><Ico s={20}><path d="M6 5H18V21H6Z" fill="#d4d4d4" /><ellipse cx="12" cy="5" rx="6" ry="3" fill="#cfcfcf" /></Ico></PanelBtn>
            </div>
          </Panel>

          <Panel title="Selection" icon={<IconSel s={16} />} className="h-[149px] mt-[6px]">
            <div className="h-[100px] shrink-0 bg-white border border-[#7a8a99]" />
            <div className="h-[24px] mt-[2px] grid grid-cols-3">
              <PanelBtn>
                <SelBox /><span className="mr-[2px]">Select</span>
                <span className="absolute right-[8px] border-x-[4px] border-x-transparent border-t-[4px] border-t-black" />
              </PanelBtn>
              <PanelBtn on>
                <PageLens /><span className="mr-[2px] text-[#333]">Search</span>
                <span className="absolute right-[4px] top-0 bottom-0 w-[14px] bg-[#eeeeee] flex items-center justify-center"><span className="border-x-[4px] border-x-transparent border-t-[4px] border-t-black" /></span>
              </PanelBtn>
              <PanelBtn label="History"><Ico s={20}><path d="M6 4H18L20 20H4Z" fill="#d4d4d4" /></Ico></PanelBtn>
            </div>
          </Panel>

          <Panel title="Relations: 2" icon={<Ico s={16}><rect x="2" y="2" width="20" height="20" fill="#f4f4f4" /><circle cx="6" cy="18" r="1.5" fill="#ddd" /><circle cx="17" cy="6" r="1.5" fill="#ddd" /></Ico>} className="h-[149px] mt-[6px]">
            <div className="h-[18px] shrink-0 bg-white border border-[#7a8a99]" />
            <div className="h-[80px] mt-[1px] shrink-0 bg-white border border-[#7a8a99] pt-[1px] text-[11px] font-bold text-[#333]">
              <div className="h-[18px] flex items-center"><RelIcon />multipolygon (0, 0 members)</div>
              <div className="h-[18px] flex items-center bg-[#b8cfe5]"><RelIcon />multipolygon (0, 7 members)</div>
            </div>
            <div className="h-[26px] mt-[1px] grid grid-cols-5">
              <PanelBtn on><Ico s={20}><circle cx="14" cy="10" r="5" fill="none" stroke="#888" strokeWidth="3.5" /><path d="M14 1V4M14 16V19M5 10H8M20 10H23M8 4L10 6M18 14L20 16M20 4L18 6" stroke="#888" strokeWidth="2" /><path d="M8 12V23M3 18H13" stroke="#777" strokeWidth="2.4" /></Ico></PanelBtn>
              <PanelBtn on><Ico s={20}><path d="M4 2H17L20 5V22H4Z" fill="#eee" stroke="#888" /><path d="M7 7H15M7 10H13M7 13H11" stroke="#999" /><path d="M10 19L19 8L22 10L13 21L9 22Z" fill="#f08a10" /></Ico></PanelBtn>
              <PanelBtn on><Ico s={20}><path d="M4 2H14L17 5V17H4Z" fill="#fff" stroke="#333" /><path d="M8 8H18L21 11V23H8Z" fill="#fff" stroke="#333" /><path d="M9 8C9 5 14 5 15 8L17 7L16 14L10 12L12 11C12 9 10 9 10 11Z" fill="#2a6ab0" /></Ico></PanelBtn>
              <PanelBtn on><Ico s={22}><Trash /></Ico></PanelBtn>
              <PanelBtn on><SelBox c="#222" /></PanelBtn>
            </div>
          </Panel>

          <Panel title="Validation Results" icon={<IconCheck s={17} />} className="h-[106px] mt-[6px]" extra>
            <div className="h-[58px] shrink-0 bg-white border border-[#7a8a99]" />
            <div className="h-[25px] mt-[1px] grid grid-cols-5">
              <PanelBtn label="Select"><SelBox s={18} /></PanelBtn>
              <PanelBtn on><PageLens /><span className="text-[#333]">Lookup</span></PanelBtn>
              <PanelBtn on><IconCheck s={19} /><span className="text-[#333]">Validation</span></PanelBtn>
              <PanelBtn label="Fix"><Wrench /></PanelBtn>
              <PanelBtn label="Ignore"><Wrench /></PanelBtn>
            </div>
          </Panel>

          <Panel title="Map Paint Styles" icon={<IconPalette s={16} />} head="h-[18px]" className="h-[20px] mt-[8px]" open={false} extra />

          <Panel title="Indoor Mapping Helper" icon={<IconHome s={18} />} head="h-[19px] pb-[2px]" className="h-[327px] mt-[1px]">
            <div className="h-[306px] shrink-0 border border-[#7a8a99] pl-[11px] pt-[13px] text-[11px] font-bold">
              <div className="w-[40px] h-[27px] flex items-center justify-center bg-[#bdbdbd] border border-[#7a8a99]">?</div>
              <div className="grid grid-cols-[88px_135px_30px_141px_9px_13px_9px_103px] auto-rows-[27px] items-center mt-[5px] [&>span]:pt-[1px]">
                <span>Level name</span>
                <Input />
                <span />
                <span className="col-span-2 whitespace-nowrap">Working level: 1</span>
                <Check />
                <span />
                <FormBtn className="h-[27px]">Insert level</FormBtn>
              </div>
              <div className="h-[1px] w-[563px] bg-[#7a90c0] mt-[5px]" />
              <div className="grid grid-cols-[88px_135px_30px_141px] auto-rows-[27px] gap-y-[5px] items-center mt-[6px] [&>span]:pt-[1px]">
                <span>Object</span>
                <div className="h-[27px] flex border border-[#7a8a99] bg-[#eeeeee]">
                  <div className="flex-1 flex items-center pl-[2px] pt-[1px] font-bold whitespace-nowrap overflow-hidden">CONCRETE_WALL</div>
                  <div className={`w-[18px] flex items-center justify-center border-l border-[#7a8a99] ${btnOn}`}>
                    <span className="border-x-[5px] border-x-transparent border-t-[5px] border-t-black" />
                  </div>
                </div>
                <span />
                <FormBtn className="h-[27px]">ROOM</FormBtn>
                <span>Name</span>
                <Input />
                <span />
                <FormBtn className="h-[27px]">STEPS</FormBtn>
                <span>Reference</span>
                <Input />
                <span />
                <FormBtn className="h-[27px]">CONCRETE_WALL</FormBtn>
                <span>Repeat on</span>
                <div className="h-[27px] bg-white border border-[#b8cfe5]" />
                <span />
                <FormBtn className="h-[27px]">GLASS_WALL</FormBtn>
              </div>
              <div className="h-[1px] w-[563px] bg-[#7a90c0] mt-[5px]" />
              <div className="grid grid-cols-[88px_135px_30px_141px_9px_13px] auto-rows-[27px] items-center mt-[8px] [&>span]:pt-[1px]">
                <span>Multipolygon</span>
                <FormBtn className="h-[27px]">OUTER</FormBtn>
                <span />
                <FormBtn className="h-[27px]">INNER</FormBtn>
                <span />
                <Check />
              </div>
              <FormBtn className="h-[25px] w-[569px] mt-[19px]">Apply</FormBtn>
            </div>
          </Panel>
        </aside>
      </div>

      {/* status bar */}
      <footer className="h-[18px] mt-[2px] mb-[2px] shrink-0 flex gap-[3px] pl-[2px] text-[12.3px] leading-[18px] text-[#2a2a2a] whitespace-nowrap">
        <div className="w-[121px] bg-[#b8cfe5] flex items-center">
          <svg viewBox="0 0 18 18" width={17} height={17} className="mr-[2px] ml-[1px]"><circle cx="9" cy="9" r="8" fill="none" stroke="#555" /><path d="M1 9H17" stroke="#d03010" strokeWidth="2" /></svg>
          50.8135997
        </div>
        <div className="w-[129px] bg-[#b8cfe5] flex items-center">
          <svg viewBox="0 0 18 18" width={17} height={17} className="mr-[2px] ml-[1px]"><circle cx="9" cy="9" r="8" fill="none" stroke="#555" /><path d="M9 1V17" stroke="#d03010" strokeWidth="2" /></svg>
          12.9298992
        </div>
        <div className="w-[73px] bg-[#b8cfe5] flex items-center">
          <svg viewBox="0 0 18 18" width={17} height={17} className="ml-[1px]"><circle cx="9" cy="9" r="8" fill="none" stroke="#555" /><path d="M5 14L13 3" stroke="#d03010" strokeWidth="2" /></svg>
        </div>
        <div className="w-[73px] bg-[#b8cfe5] flex items-center">
          <svg viewBox="0 0 18 18" width={17} height={17} className="ml-[1px]"><path d="M1 15L10 2M1 15H17M7 7Q12 10 12 15" fill="none" stroke="#000" strokeWidth="1.4" /></svg>
        </div>
        <div className="w-[105px] bg-[#b8cfe5] flex items-center">
          <svg viewBox="0 0 18 10" width={18} height={10} className="mr-[3px]"><rect x=".5" y=".5" width="17" height="9" fill="#fff" stroke="#333" /><path d="M4 1V5M7 1V5M10 1V5M13 1V5" stroke="#333" /></svg>
          --
        </div>
        <div className="w-[668px] bg-[#b8cfe5] flex items-center">
          <svg viewBox="0 0 20 20" width={18} height={18} className="mr-[2px]"><path d="M3 8L13 2M3 8L6 17" stroke="#d03010" fill="none" /><path d="M8 6V19L11 16L13 20L15 19L13 15L17 15Z" fill="#fff" stroke="#000" /></svg>
          (no object)
        </div>
        <div className="flex-1 min-w-0 border border-[#b8cfe5] bg-[#eeeeee] flex justify-end overflow-hidden pr-[2px] leading-[16px] text-[11.6px]">
          <span>Left-click to select; drag by dragging; Shift to add to selection (Ctrl to toggle); Shift-Ctrl to rotate selected; Alt-Ctrl to scale selected; or change selection</span>
        </div>
      </footer>
    </div>
  );
}
